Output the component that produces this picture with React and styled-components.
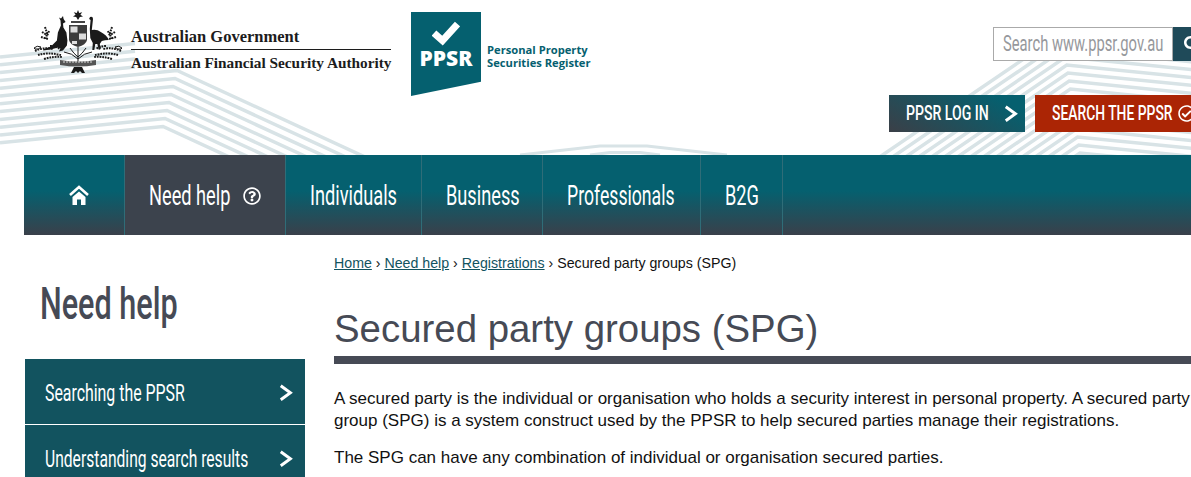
import React from 'react';
import styled, { createGlobalStyle } from 'styled-components';
import { FaRegQuestionCircle, FaRegCheckCircle, FaSearch } from 'react-icons/fa';

const Chevron = ({ size = 16 }) => (
  <svg width={size} height={size * 1.25} viewBox="0 0 16 20" fill="none" stroke="white" strokeWidth="3.4">
    <path d="M2 2 L13 10 L2 18" />
  </svg>
);

const HomeIcon = () => (
  <svg width="20" height="20" viewBox="0 0 20 20" fill="white">
    <path d="M1 10 L10 2 L19 10" fill="none" stroke="white" strokeWidth="2.6" />
    <path d="M3.500 12 L10 6.500 L16.500 12 V20 H12 V14.500 H8 V20 H3.500Z" />
  </svg>
);

const Crest = () => (
  <svg width="88" height="64" viewBox="0 0 88 64" fill="#1a1a1a">
    <path d="M44 0 l1.200 3 3-.8 -1.800 2.600 2.600 1.800 -3.200 .4 -1.800 3 -1.800-3 -3.200-.4 2.600-1.800 -1.800-2.600 3 .8z" />
    <path d="M37 11 h14 v2 h-14z" fill="#444" />
    <path d="M35 15 h18 v15 q-1 5 -9 7 q-8 -2 -9 -7z" fill="#3c3c3c" />
    <path d="M36.500 16.500 h7 v6 h-7z M45 23.500 h7 v6 h-7z M38 31 h5 v3 h-5z" fill="#ddd" />
    <path d="M29 6 l.6 3 2 3 -2.600 1.400 .4 4 3 5 1 8 -.5 5 -4 5 -4 1 1.500 -3 -2 -1 -8 2 -7 1 -.5 -1 8 -3 6 -6 1 -8 3 -7 -.4 -5 -1.500 -3 2 1z" />
    <path d="M56 7 q3 -1 3 2 l-1.200 11 q5 -1 9 2 q6 3 8 8 q-4 0 -7 1 l-2 3 1 5 -2 1 -1.500 -6 -2 0 -1 6 -2 0 .5 -7 -2.500 -5 -.5 -9 .8 -9 -1.500 -1z" />
    <g stroke="#1a1a1a" strokeWidth="2" fill="none" strokeDasharray="1.800 .9">
      <path d="M11 17 l2 6 -1 6 M8 22 l5 3 M15 21 l-2 5 M7 27 l7 2" />
      <path d="M78 17 l-2 6 1 6 M81 22 l-5 3 M74 21 l2 5 M82 27 l-7 2" />
      <path d="M1 41 q8 -4 18 -2 M4 45 q10 -3 23 0 M10 49 q10 -3 18 -2 M16 36 q6 0 10 3" />
      <path d="M87 41 q-8 -4 -18 -2 M84 45 q-10 -3 -23 0 M78 49 q-10 -3 -18 -2 M72 36 q-6 0 -10 3" />
    </g>
    <g stroke="#1a1a1a" strokeWidth="1" fill="none">
      <path d="M44 37 v15 M36 38 q4 6 8 9 M52 38 q-4 6 -8 9 M30 42 q8 1 14 7 M58 42 q-8 1 -14 7" />
      <path d="M0 38 q3 -3 7 -1 q-2 3 -6 2z M88 38 q-3 -3 -7 -1 q2 3 6 2z" />
    </g>
    <path d="M26 50 q18 3 36 0 v5 q-18 3 -36 0z" fill="#555" />
    <path d="M29 52 h30" stroke="#ddd" strokeWidth="1" strokeDasharray="2 1" />
    <path d="M40 57 h8 l3 6 h-3 l-2 -2 -2 2 -2 -2 -2 2 h-3z" />
  </svg>
);

// background chevrons behind the header
const leftPaths = [];
for (let i = 0; i < 12; i++) {
  const y = 57 + i * 7.8;
  if (i < 4) {
    leftPaths.push(`M0 ${y} L135 ${y - 13.5}`);
  } else {
    const x = 177 - (i - 4) * 2;
    const apex = y - x * 0.1;
    leftPaths.push(`M0 ${y} L${x} ${apex} L${x + 300} ${apex + 300 * 0.46}`);
  }
}

const rightPaths = [];
for (let i = 0; i < 16; i++) {
  const y = 33 + i * 8;
  const x = 1066 + (y - 60) * 0.15;
  rightPaths.push(`M${x - 300} ${y + 300 * 0.68} L${x} ${y} L${x + 300} ${y + 30}`);
}

const Pattern = () => (
  <Lines viewBox="0 0 1240 155" width="1240" height="155" fill="none" stroke="#d8e3e6" strokeWidth="3.500">
    {leftPaths.map((d, i) => <path key={i} d={d} />)}
    {rightPaths.map((d, i) => <path key={i} d={d} />)}
    <path d="M520 155 L600 146 L647 146 L727 155 M590 155 L610 152.500 L640 152.500 L660 155" strokeWidth="3" />
  </Lines>
);

const navItems = [
  { label: 'Need help', w: 81, x: 0.65, help: true },
  { label: 'Individuals', w: 87, x: 0.65 },
  { label: 'Business', w: 72, x: 0.65 },
  { label: 'Professionals', w: 109, x: 0.63 },
  { label: 'B2G', w: 33, x: 0.65 },
];

export default function App() {
  return (
    <Page>
      <GlobalStyle />
      <Header>
        <Pattern />
        <Brand>
          <Crest />
          <GovText>
            <GovLine>Australian Government</GovLine>
            <GovLine $ruled>Australian Financial Security Authority</GovLine>
          </GovText>
        </Brand>
        <LogoBadge>
          <svg width="28" height="25" viewBox="0 0 28 25" fill="none" stroke="white" strokeWidth="7">
            <path d="M2 12 L10.500 19.500 L25.500 3" />
          </svg>
          <LogoLetters>PPSR</LogoLetters>
        </LogoBadge>
        <LogoName>Personal Property<br />Securities Register</LogoName>
        <HeaderTools>
          <SearchRow>
            <SearchBox><Squeeze $x={0.67} $size={22} $weight={400} $w={159}>Search www.ppsr.gov.au</Squeeze></SearchBox>
            <SearchButton><FaSearch size={16} color="white" /></SearchButton>
          </SearchRow>
          <ActionRow>
            <LoginButton>
              <Squeeze $x={0.67} $size={21} $weight={500} $w={83}>PPSR LOG IN</Squeeze>
              <Chevron size={14} />
            </LoginButton>
            <SearchPpsrButton>
              <Squeeze $x={0.66} $size={21} $weight={500} $w={120}>SEARCH THE PPSR</Squeeze>
              <FaRegCheckCircle size={17} color="white" />
            </SearchPpsrButton>
          </ActionRow>
        </HeaderTools>
      </Header>

      <Nav>
        <HomeItem><HomeIcon /></HomeItem>
        {navItems.map(item => (
          <NavItem key={item.label} $active={item.help}>
            <Squeeze $x={item.x} $size={28} $weight={400} $w={item.w}>{item.label}</Squeeze>
            {item.help && <FaRegQuestionCircle size={18} color="white" />}
          </NavItem>
        ))}
      </Nav>

      <Body>
        <Sidebar>
          <SideTitle><Squeeze $x={0.695} $size={44} $weight={500} $w={138}>Need help</Squeeze></SideTitle>
          <SideItem>
            <Squeeze $x={0.69} $size={23} $weight={400} $w={140}>Searching the PPSR</Squeeze>
            <Chevron size={14} />
          </SideItem>
          <SideItem>
            <Squeeze $x={0.68} $size={23} $weight={400} $w={203}>Understanding search results</Squeeze>
            <Chevron size={14} />
          </SideItem>
        </Sidebar>
        <Main>
          <Crumbs>
            <CrumbLink>Home</CrumbLink> › <CrumbLink>Need help</CrumbLink> › <CrumbLink>Registrations</CrumbLink> › Secured party groups (SPG)
          </Crumbs>
          <Title>Secured party groups (SPG)</Title>
          <Para>
            A secured party is the individual or organisation who holds a security interest in personal property. A secured party
            group (SPG) is a system construct used by the PPSR to help secured parties manage their registrations.
          </Para>
          <Para>The SPG can have any combination of individual or organisation secured parties.</Para>
        </Main>
      </Body>
    </Page>
  );
}

const GlobalStyle = createGlobalStyle`
  html, body {
    margin: 0;
    background: white;
    overflow: hidden;
    font-family: "Liberation Sans", Arial, sans-serif;
  }
`;

const Page = styled.div`
  width: 1240px;
  height: 477px;
  overflow: hidden;
`;

// the reference uses a condensed face, so the text is narrowed to its visual width
const Squeeze = styled.span`
  display: inline-block;
  flex: none;
  width: ${p => p.$w}px;
  white-space: nowrap;
  font-family: Roboto, "Liberation Sans", sans-serif;
  font-size: ${p => p.$size}px;
  font-weight: ${p => p.$weight};
  line-height: 1;
  transform: scaleX(${p => p.$x});
  transform-origin: left;
`;

const Header = styled.header`
  position: relative;
  height: 155px;
  display: flex;
  align-items: flex-start;
`;

const Lines = styled.svg`
  position: absolute;
  left: 0;
  top: 0;
  z-index: 0;
`;

const Brand = styled.div`
  position: relative;
  display: flex;
  align-items: flex-start;
  gap: 9px;
  padding: 10px 0 0 34px;
  width: 357px;
`;

const GovText = styled.div`
  padding-top: 17px;
  width: 260px;
`;

const GovLine = styled.div`
  font-family: "Liberation Serif", serif;
  font-weight: 700;
  font-size: 16.500px;
  line-height: 20px;
  color: #1c1c1c;
  white-space: nowrap;
  ${p => p.$ruled && 'border-top: 1px solid #1c1c1c; margin-top: 2px; padding-top: 3px; font-size: 15.300px;'}
`;

const LogoBadge = styled.div`
  position: relative;
  margin: 12px 0 0 20px;
  width: 70px;
  height: 84px;
  flex: none;
  background: #05606f;
  clip-path: polygon(0 0, 100% 0, 100% 83%, 0 100%);
  display: flex;
  flex-direction: column;
  align-items: center;
  padding-top: 9px;
  box-sizing: border-box;
`;

const LogoLetters = styled.div`
  color: white;
  font-family: "Open Sans", sans-serif;
  font-weight: 800;
  font-size: 21px;
  line-height: 24px;
`;

const LogoName = styled.div`
  position: relative;
  margin: 43px 0 0 6px;
  color: #05606f;
  font-family: "Open Sans", sans-serif;
  font-weight: 700;
  font-size: 11.200px;
  line-height: 13px;
  white-space: nowrap;
`;

const HeaderTools = styled.div`
  position: relative;
  margin-left: 298px;
  display: flex;
  flex-direction: column;
  align-items: flex-start;
  padding-top: 27px;
`;

const SearchRow = styled.div`
  display: flex;
  margin-left: 104px;
`;

const SearchBox = styled.div`
  width: 180px;
  height: 34px;
  box-sizing: border-box;
  border: 1px solid #aaa;
  background: white;
  color: #96989c;
  display: flex;
  align-items: center;
  padding-left: 9px;
`;

const SearchButton = styled.div`
  width: 40px;
  height: 34px;
  background: #1f4a59;
  display: flex;
  align-items: center;
  padding-left: 11px;
  box-sizing: border-box;
`;

const ActionRow = styled.div`
  display: flex;
  gap: 10px;
  margin-top: 34px;
`;

const LoginButton = styled.div`
  width: 136px;
  height: 37px;
  background: linear-gradient(30deg, #3b3f47, #05606f 85%);
  color: white;
  display: flex;
  align-items: center;
  justify-content: space-between;
  padding: 0 7px 0 17px;
  box-sizing: border-box;
`;

const SearchPpsrButton = styled.div`
  width: 190px;
  height: 37px;
  background: #ab2505;
  color: white;
  display: flex;
  align-items: center;
  gap: 6px;
  padding-left: 17px;
  box-sizing: border-box;
`;

const Nav = styled.nav`
  position: relative;
  margin-left: 24px;
  height: 80px;
  display: flex;
  background: linear-gradient(#05606f 0%, #05606f 45%, #3a404a 100%);
`;

const HomeItem = styled.div`
  width: 101px;
  border-right: 1px solid #2f6d78;
  display: flex;
  align-items: center;
  justify-content: center;
  padding-left: 10px;
  box-sizing: border-box;
`;

const NavItem = styled.div`
  border-right: 1px solid #2f6d78;
  background: ${p => (p.$active ? '#3c434d' : 'transparent')};
  color: white;
  display: flex;
  align-items: center;
  gap: 13px;
  padding: 1px 24px 0;
`;

const Body = styled.div`
  display: flex;
`;

const Sidebar = styled.aside`
  width: 280px;
  margin-left: 25px;
  flex: none;
`;

const SideTitle = styled.h2`
  margin: 44px 0 30px 15px;
  height: 50px;
  color: #464a55;
  display: flex;
  align-items: center;
`;

const SideItem = styled.div`
  height: 62px;
  background: #12535f;
  color: white;
  border-bottom: 1px solid white;
  display: flex;
  align-items: center;
  justify-content: space-between;
  padding: 3px 12px 0 20px;
`;

const Main = styled.main`
  margin-left: 29px;
  width: 880px;
  flex: none;
`;

const Crumbs = styled.div`
  margin-top: 20px;
  font-size: 14.200px;
  line-height: 16px;
  color: #111;
`;

const CrumbLink = styled.a`
  color: #12535f;
  text-decoration: underline;
`;

const Title = styled.h1`
  margin: 36px 0 0;
  padding-bottom: 5px;
  border-bottom: 8px solid #464a55;
  font-size: 38.400px;
  font-weight: 400;
  line-height: 44px;
  color: #464a55;
`;

const Para = styled.p`
  margin: 0 0 15px;
  font-size: 17px;
  line-height: 22px;
  color: #111;
  &:first-of-type { margin-top: 24px; }
`;
